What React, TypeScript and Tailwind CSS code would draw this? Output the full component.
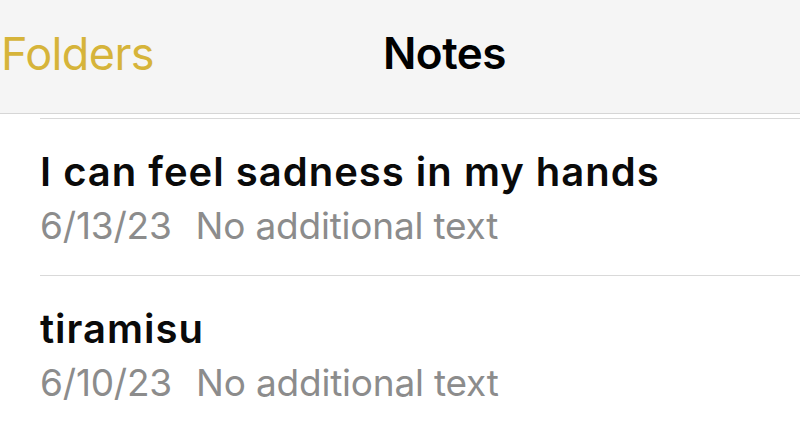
import React from "react";

const notes = [
  { title: "I can feel sadness in my hands", date: "6/13/23" },
  { title: "tiramisu", date: "6/10/23" },
];

export default function App() {
  return (
    <div
      className="w-[800px] h-[430px] overflow-hidden bg-white"
      style={{ fontFamily: "Inter, 'Noto Sans', sans-serif" }}
    >
      <div className="h-[114px] bg-[#f5f5f5] border-b border-[#d6d6d6] flex items-center pb-[7px]">
        <span className="text-[45px] leading-none text-[#d6b43a] tracking-[-0.6px] pl-[1px]">Folders</span>
        <span className="ml-[229px] text-[44px] leading-none font-semibold text-black tracking-[-0.5px]">Notes</span>
      </div>
      <div className="h-[4px]" />
      <div className="ml-[40px]">
        {notes.map((n) => (
          <div key={n.date} className="border-t border-[#d9d9d9] pt-[26px] pb-[22px]">
            <div className="text-[40px] leading-[54px] font-semibold text-[#0a0a0a] tracking-[1px] whitespace-nowrap">
              {n.title}
            </div>
            <div className="text-[37px] leading-[54px] text-[#8c8c8c] whitespace-nowrap tracking-[-0.2px]">
              <span>{n.date}</span>
              <span className="ml-[24px]">No additional text</span>
            </div>
          </div>
        ))}
      </div>
    </div>
  );
}
